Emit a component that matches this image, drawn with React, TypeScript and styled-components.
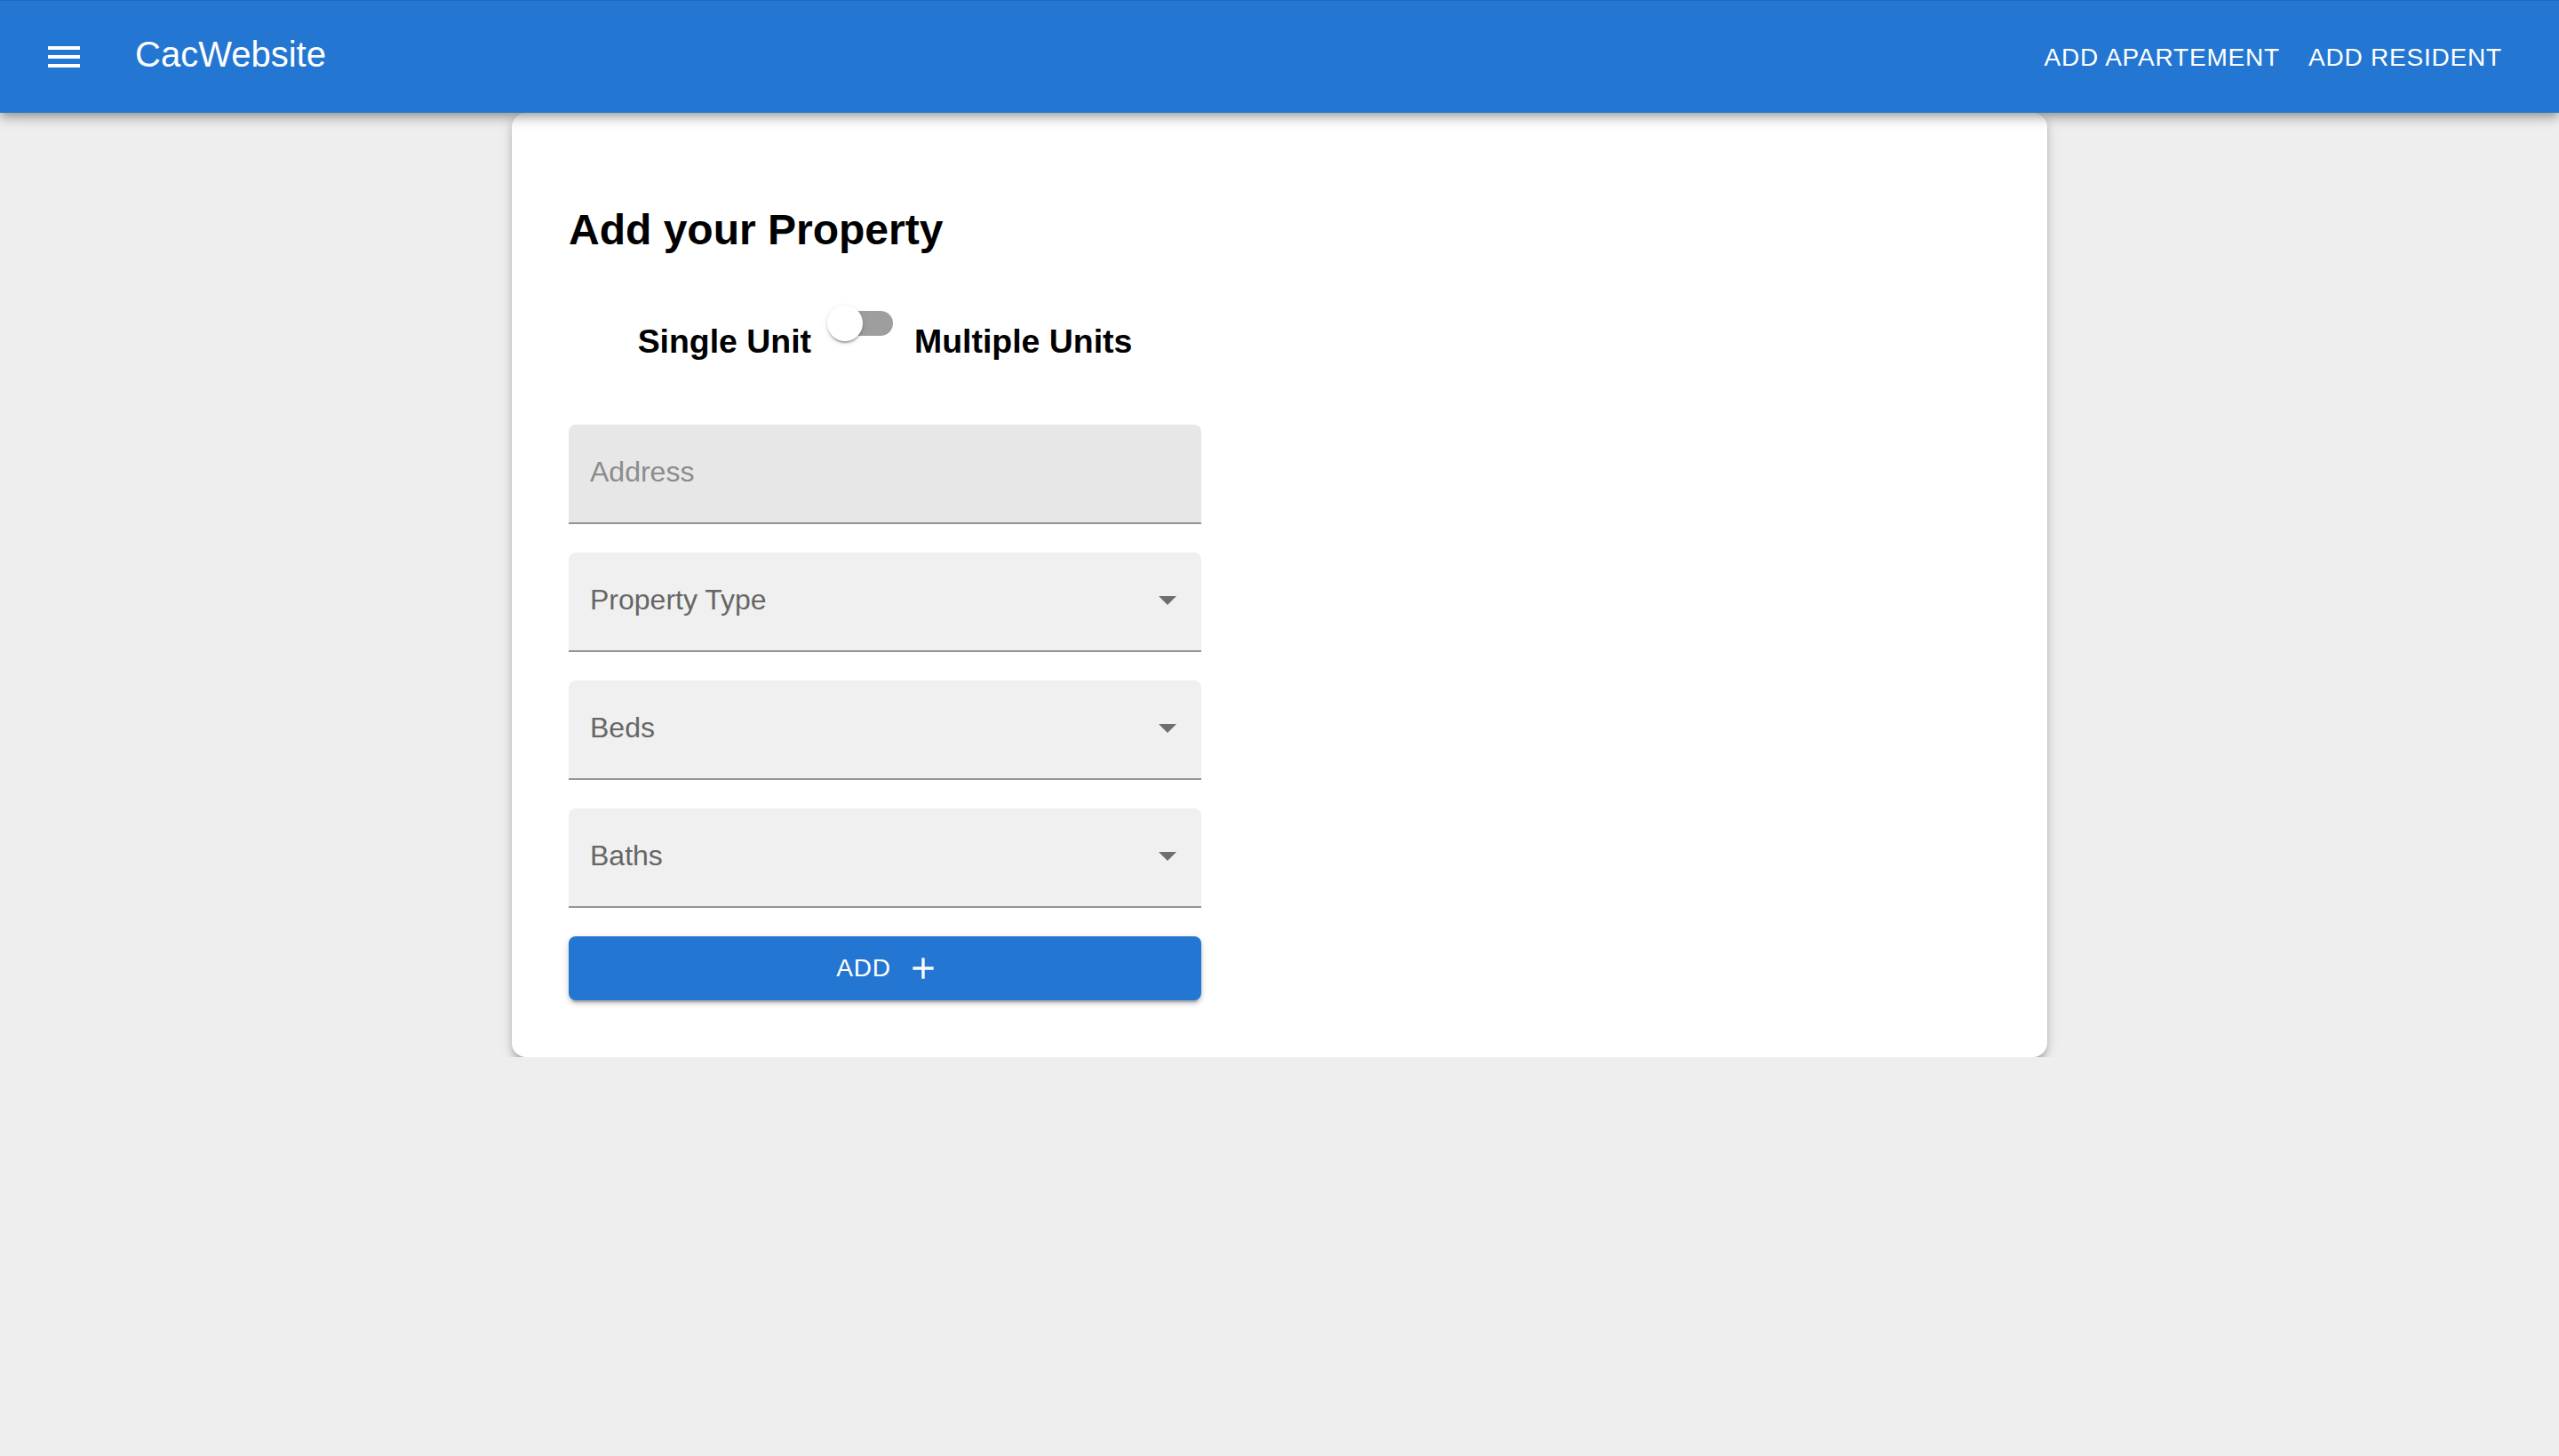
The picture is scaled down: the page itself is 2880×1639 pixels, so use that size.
import React from "react";
import styled, { createGlobalStyle } from "styled-components";

const GlobalStyle = createGlobalStyle`
  html, body {
    margin: 0;
    padding: 0;
    background: #eeeeee;
    font-family: "Liberation Sans", Arial, Helvetica, sans-serif;
  }
  * { box-sizing: border-box; }
`;

const BLUE = "#2377d2";

const Page = styled.div`
  background: #eeeeee;
`;

const AppBar = styled.header`
  position: relative;
  z-index: 2;
  height: 127px;
  background: ${BLUE};
  border-top: 1px solid #1d6ac0;
  display: flex;
  align-items: center;
  padding: 0 48px;
  box-shadow: 0 4px 8px -2px rgba(0, 0, 0, 0.2), 0 8px 10px 0 rgba(0, 0, 0, 0.14),
    0 2px 20px 0 rgba(0, 0, 0, 0.12);
`;

const MenuButton = styled.button`
  border: 0;
  background: transparent;
  padding: 24px;
  margin: 0 32px 0 -24px;
  display: flex;
  cursor: pointer;
  svg {
    width: 48px;
    height: 48px;
    fill: #ffffff;
  }
`;

const Title = styled.div`
  flex: 1;
  color: #ffffff;
  font-size: 40px;
  line-height: 1.6;
  margin-bottom: 6px;
`;

const NavButton = styled.button`
  border: 0;
  background: transparent;
  color: #ffffff;
  font-family: inherit;
  font-size: 28px;
  letter-spacing: 0.02857em;
  text-transform: uppercase;
  line-height: 1.75;
  padding: 12px 16px;
  cursor: pointer;
`;

const Card = styled.main`
  position: relative;
  z-index: 1;
  width: 60%;
  margin: 0 auto;
  background: #ffffff;
  border-radius: 16px;
  padding: 64px;
  box-shadow: 0 6px 6px -4px rgba(0, 0, 0, 0.2), 0 6px 8px 0 rgba(0, 0, 0, 0.14),
    0 2px 16px 0 rgba(0, 0, 0, 0.12);
`;

const Heading = styled.h2`
  margin: 40px 0;
  font-size: 48px;
  line-height: 55px;
  font-weight: 700;
  color: #000000;
`;

const FormColumn = styled.div`
  width: 712px;
  display: flex;
  flex-direction: column;
`;

const ToggleRow = styled.div`
  display: flex;
  justify-content: center;
  margin-bottom: 34px;
`;

const ToggleLabel = styled.h3`
  margin: 37.44px 0;
  font-size: 37.44px;
  line-height: 43px;
  font-weight: 700;
  color: #000000;
`;

const SwitchRoot = styled.span`
  position: relative;
  display: inline-block;
  width: 116px;
  height: 76px;
  padding: 24px;
  flex-shrink: 0;
`;

const SwitchTrack = styled.span`
  display: block;
  width: 68px;
  height: 28px;
  border-radius: 14px;
  background: #9e9e9e;
`;

const SwitchThumb = styled.span<{ $on?: boolean }>`
  position: absolute;
  top: 18px;
  left: ${(p) => (p.$on ? "58px" : "18px")};
  width: 40px;
  height: 40px;
  border-radius: 50%;
  background: #ffffff;
  box-shadow: 0 4px 2px -2px rgba(0, 0, 0, 0.2), 0 2px 2px 0 rgba(0, 0, 0, 0.14),
    0 2px 6px 0 rgba(0, 0, 0, 0.12);
`;

const FieldList = styled.div`
  display: flex;
  flex-direction: column;
  gap: 32px;
`;

const Field = styled.div<{ $input?: boolean }>`
  height: 112px;
  display: flex;
  align-items: center;
  justify-content: space-between;
  padding: 0 14px 4px 24px;
  background: ${(p) => (p.$input ? "#e7e7e7" : "#f0f0f0")};
  border-radius: 8px 8px 0 0;
  border-bottom: 2px solid #949494;
`;

const FieldLabel = styled.span<{ $input?: boolean }>`
  font-size: 32px;
  line-height: 46px;
  color: ${(p) => (p.$input ? "#8c8c8c" : "#666666")};
`;

const ArrowIcon = styled.svg`
  width: 48px;
  height: 48px;
  fill: rgba(0, 0, 0, 0.54);
`;

const AddButton = styled.button`
  margin-top: 32px;
  height: 72px;
  border: 0;
  border-radius: 8px;
  background: ${BLUE};
  color: #ffffff;
  font-family: inherit;
  font-size: 28px;
  letter-spacing: 0.02857em;
  text-transform: uppercase;
  display: flex;
  align-items: center;
  justify-content: center;
  cursor: pointer;
  box-shadow: 0 6px 2px -4px rgba(0, 0, 0, 0.2), 0 4px 4px 0 rgba(0, 0, 0, 0.14),
    0 2px 10px 0 rgba(0, 0, 0, 0.12);
  svg {
    width: 40px;
    height: 40px;
    fill: #ffffff;
    margin: 0 -8px 0 16px;
  }
`;

const Arrow = () => (
  <ArrowIcon viewBox="0 0 24 24">
    <path d="M7 10l5 5 5-5z" />
  </ArrowIcon>
);

const selects = ["Property Type", "Beds", "Baths"];

export default function App() {
  return (
    <Page>
      <GlobalStyle />
      <AppBar>
        <MenuButton aria-label="menu">
          <svg viewBox="0 0 24 24">
            <path d="M3 18h18v-2H3v2zm0-5h18v-2H3v2zm0-7v2h18V6H3z" />
          </svg>
        </MenuButton>
        <Title>CacWebsite</Title>
        <NavButton>Add Apartement</NavButton>
        <NavButton>Add Resident</NavButton>
      </AppBar>
      <Card>
        <Heading>Add your Property</Heading>
        <FormColumn>
          <ToggleRow>
            <ToggleLabel>Single Unit</ToggleLabel>
            <SwitchRoot>
              <SwitchTrack />
              <SwitchThumb />
            </SwitchRoot>
            <ToggleLabel>Multiple Units</ToggleLabel>
          </ToggleRow>
          <FieldList>
            <Field $input>
              <FieldLabel $input>Address</FieldLabel>
            </Field>
            {selects.map((s) => (
              <Field key={s}>
                <FieldLabel>{s}</FieldLabel>
                <Arrow />
              </Field>
            ))}
          </FieldList>
          <AddButton>
            Add
            <svg viewBox="0 0 24 24">
              <path d="M19 13h-6v6h-2v-6H5v-2h6V5h2v6h6v2z" />
            </svg>
          </AddButton>
        </FormColumn>
      </Card>
    </Page>
  );
}
